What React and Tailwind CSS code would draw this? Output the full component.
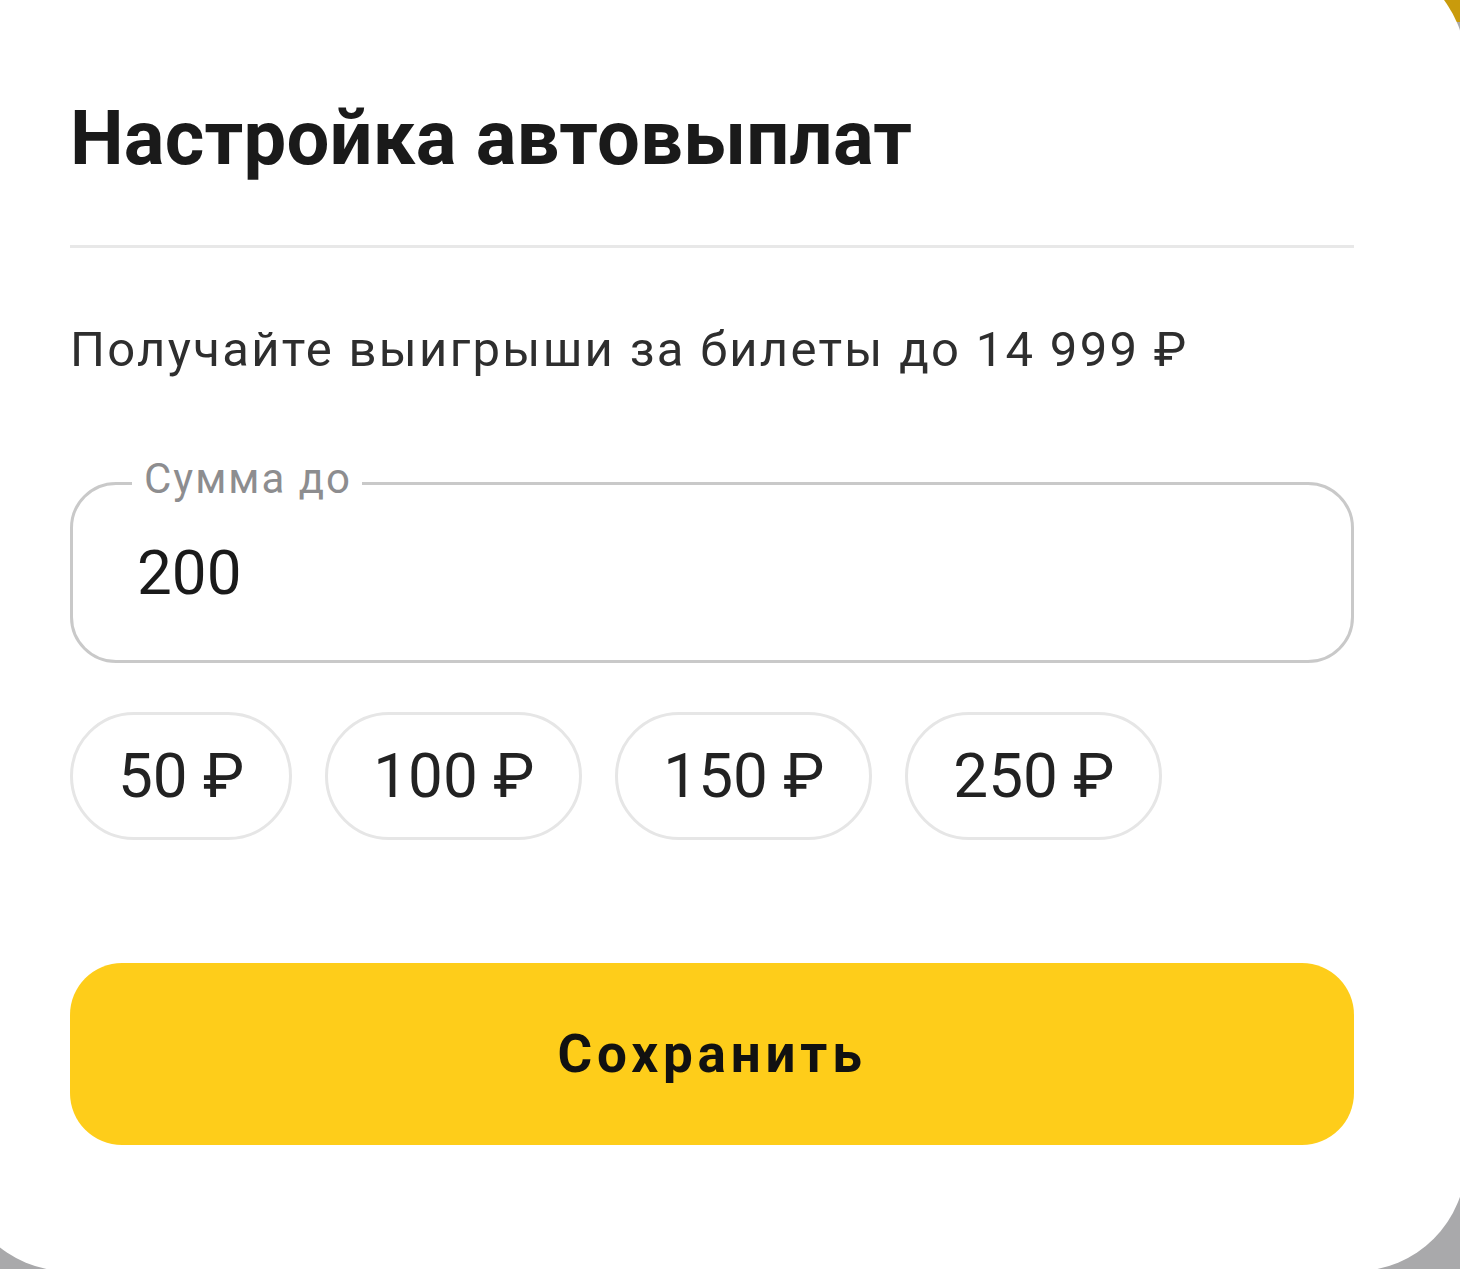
import React from 'react';

const amounts = ['50 ₽', '100 ₽', '150 ₽', '250 ₽'];

export default function App() {
  return (
    <div
      className="w-[1460px] h-[1269px] overflow-hidden bg-[linear-gradient(to_bottom,#c99b0c_22px,#a9a9ab_22px)]"
      style={{ fontFamily: 'Roboto, "Noto Sans", Arial, sans-serif' }}
    >
      <div className="-mt-[44px] -ml-[42px] w-[1508px] h-[1315px] rounded-[110px] bg-white px-[112px] pt-[144px] flex flex-col">
        {/* Header */}
        <h1 className="text-[76px] leading-[76px] font-bold text-[#1a1a1a] tracking-[0.2px]">Настройка автовыплат</h1>
        <div className="mt-[69px] h-[3px] bg-[#e8e8e8]" />

        <p className="mt-[77px] text-[49px] leading-[49px] text-[#2e2e2e] tracking-[2.3px]">
          Получайте выигрыши за билеты до 14 999 ₽
        </p>

        {/* Amount field */}
        <div className="relative mt-[108px] h-[181px] rounded-[46px] border-[3px] border-[#c9c9c9] flex items-center pl-[64px]">
          <span className="absolute -top-[27px] left-[59px] bg-white pl-[12px] pr-[10px] text-[42px] leading-[42px] text-[#8d8d8f] tracking-[2px]">
            Сумма до
          </span>
          <span className="text-[62px] leading-[62px] text-[#1a1a1a]">200</span>
        </div>

        {/* Quick amounts */}
        <div className="mt-[49px] flex gap-[33px]">
          {amounts.map(a => (
            <button
              key={a}
              className="h-[128px] px-[45px] rounded-full border-[3px] border-[#e6e6e6] bg-white text-[62px] leading-[62px] text-[#222]"
            >
              {a}
            </button>
          ))}
        </div>

        <button className="mt-[123px] h-[182px] rounded-[52px] bg-[#fecd1a] text-[53px] leading-[53px] font-bold text-[#111] tracking-[4.8px]">
          Сохранить
        </button>
      </div>
    </div>
  );
}
